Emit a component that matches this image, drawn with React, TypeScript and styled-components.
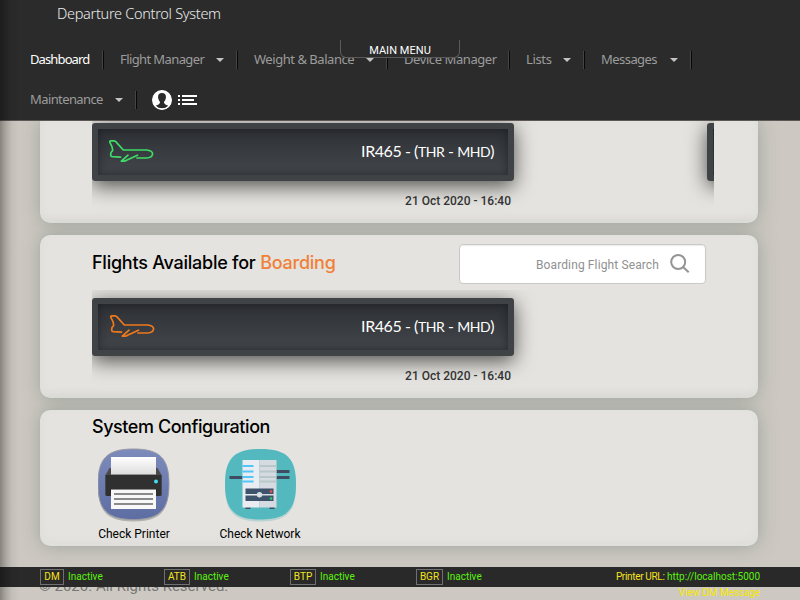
import React from "react";
import styled, { createGlobalStyle } from "styled-components";

const GlobalStyle = createGlobalStyle`
  * { box-sizing: border-box; }
  body { margin: 0; background: #cdc9c1; font-family: Roboto, sans-serif; }
`;

const Page = styled.div`
  position: relative;
  width: 800px;
  height: 600px;
  overflow: hidden;
  display: flex;
  flex-direction: column;
  background: #cdc9c2;
`;

const EdgeShade = styled.div`
  position: absolute;
  inset: 0 auto 0 0;
  width: 30px;
  z-index: 5;
  pointer-events: none;
  background: linear-gradient(90deg, rgba(0, 0, 0, 0.34), rgba(0, 0, 0, 0.17) 6px, rgba(0, 0, 0, 0.05) 12px, transparent 20px);
`;

const Header = styled.header`
  position: relative;
  z-index: 2;
  flex: none;
  height: 121px;
  background: #2b2b2b;
  border-bottom: 1px solid #5c5856;
`;

const Label = styled.span<{ $w: number; $ls?: number }>`
  display: block;
  flex: none;
  width: ${(p) => p.$w}px;
  letter-spacing: ${(p) => p.$ls ?? 0}px;
  white-space: nowrap;
`;

const Title = styled.h1`
  margin: 0;
  height: 40px;
  padding: 3px 0 0 57px;
  font: 300 14.5px/20px "Noto Sans", sans-serif;
  color: #ececec;
`;

const Nav = styled.nav`
  display: flex;
  flex-wrap: wrap;
  padding: 0 15px;
`;

const NavItem = styled.a<{ $active?: boolean }>`
  display: flex;
  align-items: center;
  height: 40px;
  padding: 0 1px 0 15px;
  font: 400 13px/20px "Noto Sans", sans-serif;
  color: ${(p) => (p.$active ? "#fff" : "#9c9c9c")};

  ${Label} { padding-bottom: 2px; }
`;

const Caret = styled.i`
  margin-left: 12px;
  border: 4px solid transparent;
  border-top-color: #c4c4c4;
  border-bottom: 0;
`;

const Divider = styled.i<{ $gap: number }>`
  width: 2px;
  height: 18px;
  margin-left: ${(p) => p.$gap}px;
  border-left: 1px solid #444;
  background: #080808;
`;

const NavIcons = styled.div`
  display: flex;
  align-items: center;
  gap: 6px;
  height: 40px;
  padding-left: 14px;
`;

const MenuTab = styled.div`
  position: absolute;
  left: 340px;
  top: 40px;
  width: 120px;
  height: 18px;
  border: 1px solid #5a5a5a;
  border-top: 0;
  border-radius: 0 0 6px 6px;
  background: #2b2b2b;
  color: #fff;
  font: 400 11px/21px Roboto, sans-serif;
  letter-spacing: 0.05px;
  text-align: center;
`;

const Main = styled.main`
  display: flex;
  flex-direction: column;
  gap: 12px;
  width: 718px;
  margin-left: 40px;
`;

const Panel = styled.section<{ $h: number; $first?: boolean }>`
  flex: none;
  height: ${(p) => p.$h}px;
  padding: 0 44px 0 52px;
  border-radius: ${(p) => (p.$first ? "0 0 10px 10px" : "10px")};
  background: #e4e3df;
  box-shadow: 0 0 1px #a4b5ac, 0 0 20px rgba(100, 116, 108, 0.46), inset 0 -4px 10px rgba(120, 120, 110, 0.05);
`;

const PanelHead = styled.div`
  display: flex;
  justify-content: space-between;
  width: 614px;
  height: 55px;
  padding-top: 9px;
`;

const Heading = styled.h2<{ $tight?: boolean }>`
  margin: 0;
  font: 500 18px/${(p) => (p.$tight ? 34 : 38)}px Inter, sans-serif;
  color: #000;
  white-space: nowrap;
  letter-spacing: ${(p) => (p.$tight ? -0.44 : -0.24)}px;
`;

const Accent = styled.span`
  color: #f08037;
`;

const Search = styled.div`
  display: flex;
  align-items: center;
  justify-content: flex-end;
  gap: 11px;
  width: 247px;
  height: 40px;
  padding-right: 15px;
  border: 1px solid #c9c9c9;
  border-radius: 4px;
  background: #fff;
  box-shadow: inset 0 1px 1px rgba(0, 0, 0, 0.08);
  font: 400 12px/20px Roboto, sans-serif;
  letter-spacing: 0.12px;
  color: #909090;
`;

const SearchHint = styled.span`
  padding-top: 2px;
`;

const Slider = styled.div<{ $top: number; $h: number }>`
  display: flex;
  gap: 193px;
  width: 622px;
  height: ${(p) => p.$h}px;
  padding-top: ${(p) => p.$top}px;
  overflow: hidden;
`;

const Slide = styled.div`
  flex: none;
  width: 422px;
`;

const FlightCard = styled.div<{ $pad: number }>`
  display: flex;
  align-items: center;
  justify-content: space-between;
  height: 58px;
  padding: 0 13px 0 ${(p) => p.$pad}px;
  border: 6px solid #3f4346;
  border-radius: 3px;
  background: linear-gradient(#2d3035, #43464b);
  box-shadow: 0 5px 20px rgba(0, 0, 0, 0.66);
  color: #fff;
  font: 400 16px/24px Lato, sans-serif;
  position: relative;

  &::after {
    content: "";
    position: absolute;
    inset: 0;
    box-shadow: inset 0 0 8px rgba(20, 22, 25, 0.6);
  }
`;

const FlightName = styled.span`
  padding-bottom: 2px;
  letter-spacing: -0.44px;
  margin-right: 1px;
`;

const Route = styled.small`
  font-size: 14px;
`;

const Departure = styled.div`
  position: relative;
  padding: 10px 3px 0 0;
  font: 500 12px/20px Roboto, sans-serif;
  color: #333;
  text-align: right;
`;

const AppRow = styled.div`
  display: flex;
  gap: 42px;
  padding-top: 4px;
`;

const AppTile = styled.div`
  display: flex;
  flex-direction: column;
  align-items: center;
  width: 84px;
  font: 400 12px/16px Roboto, sans-serif;
  color: #000;
  white-space: nowrap;

  svg { flex: none; margin-bottom: 2px; }
`;

const Footer = styled.footer`
  position: absolute;
  inset: 567px 0 0 0;
`;

const Copyright = styled.div`
  position: absolute;
  left: 39px;
  top: 9px;
  font: 400 15px/20px Roboto, sans-serif;
  color: #777;
`;

const StatusBar = styled.div`
  position: relative;
  display: flex;
  align-items: center;
  height: 20px;
  padding: 0 40px;
  background: #292929;
  font: 400 10px/14px Roboto, sans-serif;
  color: #5bf20c;
`;

const Status = styled.div<{ $w: number }>`
  display: flex;
  align-items: center;
  gap: 4px;
  width: ${(p) => p.$w}px;
`;

const Tag = styled.span<{ $w: number }>`
  width: ${(p) => p.$w}px;
  height: 16px;
  border: 1px solid #707070;
  text-align: center;
  color: #f5e31d;
`;

const Url = styled.div`
  margin-left: auto;
  white-space: nowrap;
`;

const Yellow = styled.span`
  color: #f5e31d;
  letter-spacing: -0.33px;
`;

const ViewMessage = styled.div`
  position: relative;
  width: 760px;
  margin-top: -1px;
  text-align: right;
  font: 400 10px/14px Roboto, sans-serif;
  letter-spacing: -0.08px;
  color: #f7e800;
`;

const Plane = ({ color }: { color: string }) => (
  <svg width="46" height="24" viewBox="-0.5 0 46 24" fill="none" stroke={color} strokeWidth="1.7" strokeLinejoin="round" strokeLinecap="round">
    <path d="M12 17.2 4 16.7Q2 16.5 2.2 14.6L2.5 12.6 4.2 10.4 3.6 7 1.3 2.2Q1 1 2.3 .9H5.5Q6.7 1.1 7.5 1.9L14.8 10H38Q44.1 10.6 44.1 14 43.6 17.7 38 18H28.5" />
    <path d="M19.5 15.2 12.8 21.2H15.5Q17 21 18 20.3L29 15.2" />
  </svg>
);

const SearchIcon = () => (
  <svg width="20" height="20" viewBox="0 0 20 20" fill="none" stroke="#949494" strokeWidth="2">
    <circle cx="8.2" cy="8" r="7" />
    <path d="m13 13 5.7 5.3" />
  </svg>
);

const UserIcon = () => (
  <svg width="20" height="20" viewBox="0 0 20 20">
    <circle cx="10" cy="10" r="9.4" fill="#2b2b2b" stroke="#fff" strokeWidth="1.1" />
    <path fill="#fff" fillRule="evenodd" d="M10 .5a9.5 9.5 0 1 0 0 19 9.5 9.5 0 0 0 0-19ZM10 3C6.8 3 5.6 5.3 6.2 8.3 6.6 10.4 7.6 11.3 8 12 8 14 6.5 14.8 3.7 15.8A9 9 0 0 0 16.3 15.8C13.5 14.8 12 14 12 12 12.4 11.3 13.4 10.4 13.8 8.3 14.4 5.3 13.2 3 10 3Z" />
  </svg>
);

const ListIcon = () => (
  <svg width="20" height="12" viewBox="0 0 20 12" fill="#fff">
    <path d="M0 1h2v2H0zM4 1h15v2H4zM0 5h2v2H0zM4 5h12v2H4zM0 9h2v2H0zM4 9h15v2H4z" />
  </svg>
);

const squircle = "M36 1C62 1 71.5 10 71.5 36S62 71.5 36 71.5.5 62 .5 36 10 1 36 1Z";

const PrinterIcon = () => (
  <svg width="72" height="76" viewBox="0.5 0 72 76">
    <defs>
      <linearGradient id="pr" x2="0" y2="1"><stop stopColor="#7d8bbc" /><stop offset="1" stopColor="#5d6ca2" /></linearGradient>
      <linearGradient id="paper" x2="0" y2="1"><stop stopColor="#fff" /><stop offset="1" stopColor="#ddd" /></linearGradient>
    </defs>
    <path d={squircle} transform="translate(0 2)" fill="#000" opacity=".22" />
    <path d={squircle} fill="url(#pr)" stroke="#979aa5" />
    <path d="M12 20H60L64 27V48H8V27Z" fill="#4b4b4b" />
    <path d="M13.5 9h45v17.500h-45z" fill="url(#paper)" />
    <path d="M8 27H64V46Q64 48 62 48H10Q8 48 8 46Z" fill="#303030" />
    <path d="M13 41h46v3H13z" fill="#202020" />
    <path d="M13.5 41.5h45V61h-45z" fill="#f8f8f8" />
    <path d="M16.5 46h39M16.5 51h39M16.5 56h39" stroke="#666" strokeWidth="1.7" />
    <circle cx="58.5" cy="33.5" r="2" fill="#41ddf5" />
  </svg>
);

const ServerIcon = () => (
  <svg width="72" height="76" viewBox="-0.5 0 72 76">
    <path d={squircle} transform="translate(0 2)" fill="#30a5aa" opacity=".25" />
    <path d={squircle} fill="#53b9bf" />
    <path d="M5 29.500h16M50 23.500h15M50 29.500h15" stroke="#3e4d61" strokeWidth="3" />
    <path d="M21 59h5v2h-5zM45 59h5v2h-5z" fill="#3e4d61" />
    <path d="M18 12h17v47.500H18z" fill="#e9edf1" />
    <path d="M35 12h17v47.500H35z" fill="#d5dbe0" />
    <path d="M18 18h11M18 23.500h11M18 29h11M18 33.500h11" stroke="#51c6fa" strokeWidth="2" />
    <path d="M35 18h17M35 23.500h17M35 29h17M35 33.500h17" stroke="#b8c7c8" strokeWidth="1.8" />
    <path d="M21 40.500h28v5.500H21zM21 47.500h28V53H21z" fill="#3e536b" />
    <circle cx="35" cy="46.7" r="2.7" fill="#d5e1e6" />
    <circle cx="46.5" cy="43.5" r="1.3" fill="#ef5350" />
    <circle cx="46.5" cy="50.5" r="1.3" fill="#29cf68" />
  </svg>
);

const menu = [
  { text: "Dashboard", w: 60, ls: -0.88, active: true },
  { text: "Flight Manager", w: 84, ls: -0.6, caret: true },
  { text: "Weight & Balance", w: 100, ls: -0.46, caret: true },
  { text: "Device Manager", w: 93, ls: -0.42 },
  { text: "Lists", w: 25, ls: -0.35, caret: true },
  { text: "Messages", w: 57, ls: -0.55, caret: true },
  { text: "Maintenance", w: 73, ls: -0.6, caret: true },
];

const statuses = [
  { tag: "DM", w: 24, slot: 124 },
  { tag: "ATB", w: 26, slot: 126 },
  { tag: "BTP", w: 26, slot: 126 },
  { tag: "BGR", w: 27, slot: 127 },
];

const Flight = ({ color, pad }: { color: string; pad: number }) => (
  <Slide>
    <FlightCard $pad={pad}>
      <Plane color={color} />
      <FlightName>IR465 - (<Route>THR</Route> - <Route>MHD</Route>)</FlightName>
    </FlightCard>
    <Departure>21 Oct 2020 - 16:40</Departure>
  </Slide>
);

export default function App() {
  return (
    <Page>
      <GlobalStyle />
      <EdgeShade />
      <Header>
        <Title><Label $w={164} $ls={-0.3}>Departure Control System</Label></Title>
        <Nav>
          {menu.map((m) => (
            <NavItem key={m.text} $active={m.active}>
              <Label $w={m.w} $ls={m.ls}>{m.text}</Label>
              {m.caret && <Caret />}
              <Divider $gap={m.text === "Device Manager" ? 11 : 12} />
            </NavItem>
          ))}
          <NavIcons><UserIcon /><ListIcon /></NavIcons>
        </Nav>
        <MenuTab>MAIN MENU</MenuTab>
      </Header>
      <Main>
        <Panel $h={102} $first>
          <Slider $top={2} $h={98}>
            <Flight color="#3edb66" pad={10} />
            <Flight color="#3edb66" pad={10} />
          </Slider>
        </Panel>
        <Panel $h={163}>
          <PanelHead>
            <Heading>Flights Available for <Accent>Boarding</Accent></Heading>
            <Search><SearchHint>Boarding Flight Search</SearchHint><SearchIcon /></Search>
          </PanelHead>
          <Slider $top={8} $h={106}>
            <Flight color="#f0791b" pad={11} />
          </Slider>
        </Panel>
        <Panel $h={136}>
          <Heading $tight>System Configuration</Heading>
          <AppRow>
            <AppTile><PrinterIcon />Check Printer</AppTile>
            <AppTile><ServerIcon />Check Network</AppTile>
          </AppRow>
        </Panel>
      </Main>
      <Footer>
        <Copyright>© 2020. All Rights Reserved.</Copyright>
        <StatusBar>
          {statuses.map((s) => (
            <Status key={s.tag} $w={s.slot}><Tag $w={s.w}>{s.tag}</Tag>Inactive</Status>
          ))}
          <Url><Yellow>Printer URL:</Yellow> http://localhost:5000</Url>
        </StatusBar>
        <ViewMessage>View DM Message</ViewMessage>
      </Footer>
    </Page>
  );
}
